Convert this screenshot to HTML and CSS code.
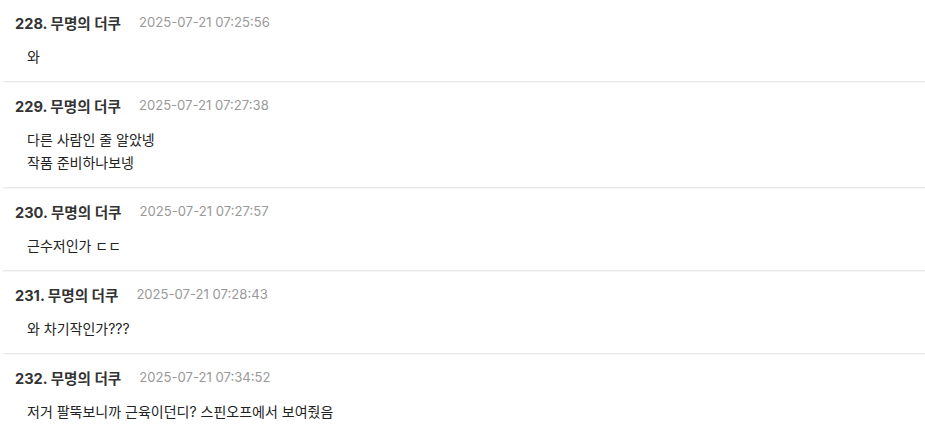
FILE: index.html
```html
<!DOCTYPE html>
<html lang="ko">
<head>
  <meta charset="UTF-8" />
  <meta name="viewport" content="width=device-width, initial-scale=1.0"/>
  <title>댓글</title>
  <link rel="stylesheet" href="styles.css">
</head>
<body>

  <ul class="comment-list">
    <li class="comment">
      <div class="comment-head">
        <span class="comment-name">228. 무명의 더쿠</span>
        <span class="comment-date">2025-07-21 07:25:56</span>
      </div>
      <div class="comment-body">와</div>
    </li>
    <li class="comment">
      <div class="comment-head">
        <span class="comment-name">229. 무명의 더쿠</span>
        <span class="comment-date">2025-07-21 07:27:38</span>
      </div>
      <div class="comment-body">다른 사람인 줄 알았넹<br>작품 준비하나보넹</div>
    </li>
    <li class="comment">
      <div class="comment-head">
        <span class="comment-name">230. 무명의 더쿠</span>
        <span class="comment-date">2025-07-21 07:27:57</span>
      </div>
      <div class="comment-body">근수저인가 ㄷㄷ</div>
    </li>
    <li class="comment">
      <div class="comment-head">
        <span class="comment-name">231. 무명의 더쿠</span>
        <span class="comment-date">2025-07-21 07:28:43</span>
      </div>
      <div class="comment-body">와 차기작인가???</div>
    </li>
    <li class="comment">
      <div class="comment-head">
        <span class="comment-name">232. 무명의 더쿠</span>
        <span class="comment-date">2025-07-21 07:34:52</span>
      </div>
      <div class="comment-body">저거 팔뚝보니까 근육이던디? 스핀오프에서 보여줬음</div>
    </li>
  </ul>

</body>
</html>
```

FILE: styles.css
```css
:root {
  --text: #222;
  --name: #333;
  --muted: #999;
  --line: #e9e9e9;
  --font: Inter, "Noto Sans CJK KR", sans-serif;
}

* {
  box-sizing: border-box;
}

body {
  margin: 0;
  background: #fff;
  color: var(--text);
  font-family: var(--font);
}

.comment-list {
  list-style: none;
  margin: -1px 0 0;
  padding: 0 0 0 3px;
}

.comment {
  padding: 13px 12px 13px;
  border-bottom: 1px solid var(--line);
  box-shadow: 0 1px 0 #f6f6f6;
}

.comment-head {
  display: flex;
  align-items: center;
  gap: 18px;
  height: 20px;
}

.comment-name {
  font-size: 14.6px;
  font-weight: 700;
  color: var(--name);
}

.comment-date {
  font-size: 13.1px;
  color: var(--muted);
}

.comment-body {
  margin-top: 13px;
  padding-left: 12px;
  font-size: 14px;
  line-height: 23px;
}
```
